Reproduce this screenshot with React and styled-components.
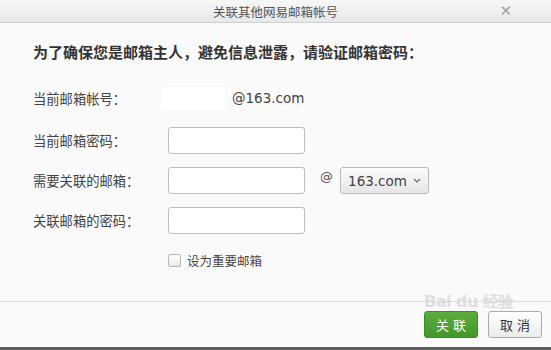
import React from 'react';
import styled, { createGlobalStyle } from 'styled-components';

const GlobalStyle = createGlobalStyle`
  html, body {
    margin: 0;
    padding: 0;
    background: #fafafa;
  }
  * {
    box-sizing: border-box;
  }
`;

const cjk = `"Noto Sans CJK SC", "Noto Sans", sans-serif`;

const Dialog = styled.div`
  width: 551px;
  height: 350px;
  display: flex;
  flex-direction: column;
  background: #fafafa;
  border-bottom: 3px solid #5e5e5e;
  font-family: ${cjk};
  position: relative;
  overflow: hidden;
`;

const TitleBar = styled.div`
  height: 23px;
  flex: none;
  display: flex;
  align-items: center;
  justify-content: center;
  position: relative;
  background: linear-gradient(#f7f7f7, #e8e8e8);
  border-bottom: 1px solid #cfcfcf;
  color: #555;
  font-size: 12.5px;
`;

const Close = styled.span`
  position: absolute;
  right: 39px;
  top: 2px;
  color: #a0a0a0;
  font-family: "DejaVu Sans", sans-serif;
  font-size: 15px;
  line-height: 18px;
`;

const Body = styled.div`
  flex: 1;
  padding: 19px 0 0 33px;
`;

const Heading = styled.div`
  font-size: 15px;
  font-weight: bold;
  line-height: 20px;
  color: #333;
`;

const Form = styled.div`
  margin-top: 22px;
  display: flex;
  flex-direction: column;
  gap: 13px;
`;

const Row = styled.div`
  display: flex;
  align-items: center;
  height: ${p => p.$h || 27}px;
  margin-bottom: ${p => p.$mb || 0}px;
  margin-top: ${p => p.$mt || 0}px;
`;

const Label = styled.div`
  width: 135px;
  flex: none;
  font-size: 13.3px;
  color: #444;
`;

const Hidden = styled.div`
  width: 64px;
  height: 23px;
  margin-left: -7px;
  background: #fff;
`;

const Domain = styled.span`
  margin-left: 7px;
  font-family: "DejaVu Sans", sans-serif;
  font-size: 13.5px;
  color: #444;
`;

const Input = styled.input`
  width: 137px;
  height: 27px;
  border: 1px solid #bdbdbd;
  border-radius: 3px;
  background: #fff;
  outline: none;
  padding: 0 6px;
`;

const At = styled.span`
  margin: 2px 7px 0 15px;
  font-family: "DejaVu Sans", sans-serif;
  font-size: 13px;
  color: #555;
  align-self: flex-start;
`;

const Select = styled.div`
  width: 89px;
  height: 27px;
  border: 1px solid #b8b8b8;
  border-radius: 3px;
  background: linear-gradient(#fdfdfd, #e6e6e6);
  display: flex;
  align-items: center;
  justify-content: center;
  gap: 6px;
  font-family: "DejaVu Sans", sans-serif;
  font-size: 13.5px;
  color: #444;
`;

const Check = styled.label`
  display: flex;
  align-items: center;
  gap: 6px;
  margin-left: 135px;
  font-size: 12.5px;
  color: #444;
`;

const Box = styled.span`
  width: 13px;
  height: 13px;
  border: 1px solid #b5b5b5;
  border-radius: 2px;
  background: linear-gradient(#fff, #e9e9e9);
`;

const Footer = styled.div`
  height: 46px;
  flex: none;
  border-top: 1px solid #dcdcdc;
  display: flex;
  align-items: center;
  justify-content: flex-end;
  gap: 10px;
  padding: 0 9px 0 0;
`;

const Button = styled.button`
  height: 27px;
  width: ${p => p.$w}px;
  border-radius: 3px;
  font-family: ${cjk};
  font-size: 13px;
  letter-spacing: 4px;
  text-indent: 4px;
  padding: 0;
  color: ${p => (p.$primary ? '#fff' : '#333')};
  border: 1px solid ${p => (p.$primary ? '#3e8a27' : '#aaa')};
  background: ${p =>
    p.$primary
      ? 'linear-gradient(#5bae3c, #43962a)'
      : 'linear-gradient(#ffffff, #ebebeb)'};
`;

/* faint site watermark sitting above the footer buttons */
const Watermark = styled.div`
  position: absolute;
  left: 424px;
  top: 294px;
  pointer-events: none;
  font-family: "DejaVu Sans", sans-serif;
  font-size: 16px;
  font-weight: bold;
  line-height: 16px;
  letter-spacing: -0.5px;
  color: rgba(215, 215, 215, 0.8);
`;

const Chevron = () => (
  <svg width="8" height="5" viewBox="0 0 8 5">
    <path d="M1 1l3 3 3-3" fill="none" stroke="#666" strokeWidth="1.1" />
  </svg>
);

export default function App() {
  return (
    <>
      <GlobalStyle />
      <Dialog>
        <TitleBar>
          关联其他网易邮箱帐号
          <Close>✕</Close>
        </TitleBar>
        <Body>
          <Heading>为了确保您是邮箱主人，避免信息泄露，请验证邮箱密码：</Heading>
          <Form>
            <Row $h={28} $mb={2}>
              <Label>当前邮箱帐号：</Label>
              <Hidden />
              <Domain>@163.com</Domain>
            </Row>
            <Row>
              <Label>当前邮箱密码：</Label>
              <Input type="password" />
            </Row>
            <Row>
              <Label>需要关联的邮箱：</Label>
              <Input />
              <At>@</At>
              <Select>
                163.com <Chevron />
              </Select>
            </Row>
            <Row>
              <Label>关联邮箱的密码：</Label>
              <Input type="password" />
            </Row>
            <Row $h={20} $mt={3}>
              <Check>
                <Box />
                设为重要邮箱
              </Check>
            </Row>
          </Form>
        </Body>
        <Footer>
          <Button $primary $w={54}>关联</Button>
          <Button $w={54}>取消</Button>
        </Footer>
        <Watermark>Bai du 经验</Watermark>
      </Dialog>
    </>
  );
}
